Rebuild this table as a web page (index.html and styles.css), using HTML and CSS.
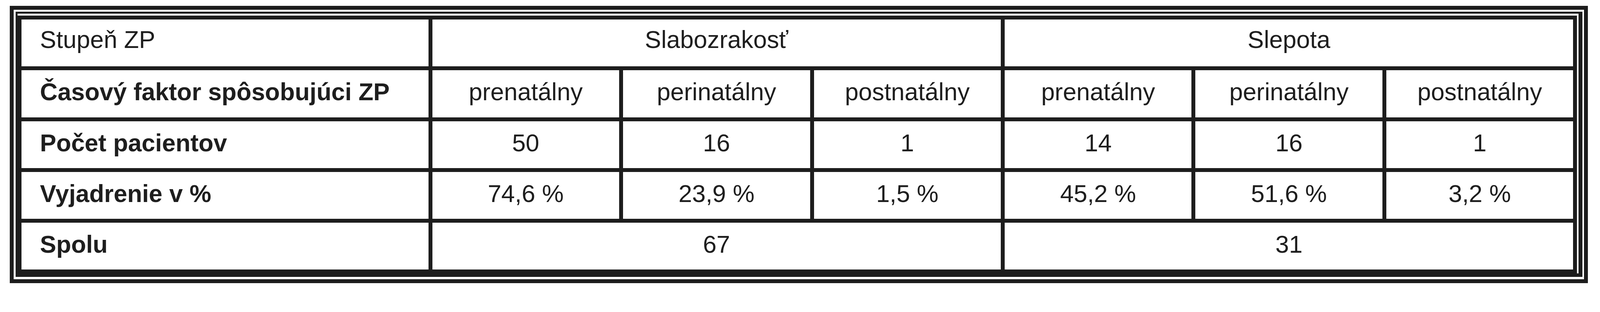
FILE: index.html
```html
<!DOCTYPE html>
<html lang="sk">
<head>
<meta charset="utf-8">
<title>Stupeň ZP</title>
<link rel="stylesheet" href="styles.css">
</head>
<body>
<div class="outer">
  <div class="inner">
    <table class="data">
      <colgroup>
        <col class="c-label">
        <col class="c-val"><col class="c-val"><col class="c-val">
        <col class="c-val"><col class="c-val"><col class="c-val">
      </colgroup>
      <tbody>
        <tr class="r-first">
          <td class="label plain">Stupeň ZP</td>
          <td colspan="3">Slabozrakosť</td>
          <td colspan="3">Slepota</td>
        </tr>
        <tr>
          <td class="label">Časový faktor spôsobujúci ZP</td>
          <td>prenatálny</td>
          <td>perinatálny</td>
          <td>postnatálny</td>
          <td>prenatálny</td>
          <td>perinatálny</td>
          <td>postnatálny</td>
        </tr>
        <tr>
          <td class="label">Počet pacientov</td>
          <td>50</td>
          <td>16</td>
          <td>1</td>
          <td>14</td>
          <td>16</td>
          <td>1</td>
        </tr>
        <tr>
          <td class="label">Vyjadrenie v %</td>
          <td>74,6 %</td>
          <td>23,9 %</td>
          <td>1,5 %</td>
          <td>45,2 %</td>
          <td>51,6 %</td>
          <td>3,2 %</td>
        </tr>
        <tr>
          <td class="label">Spolu</td>
          <td colspan="3">67</td>
          <td colspan="3">31</td>
        </tr>
      </tbody>
    </table>
  </div>
</div>
</body>
</html>
```

FILE: styles.css
```css
/* One design pixel of the 4394px-wide layout, tied to the viewport width. */
:root {
  --u: calc(100vw / 4394);
}

html, body {
  margin: 0;
  padding: 0;
  background: #ffffff;
  overflow: hidden;
}

body {
  font-family: "Liberation Sans", Arial, sans-serif;
  color: #1e1e1e;
}

.outer {
  box-sizing: border-box;
  width: calc(4334 * var(--u));
  margin: calc(16 * var(--u)) 0 0 calc(27 * var(--u));
  border: calc(11 * var(--u)) solid #1d1d1d;
  padding: calc(6 * var(--u)) calc(5 * var(--u));
}

.inner {
  border-style: solid;
  border-color: #1d1d1d;
  border-width: calc(6 * var(--u)) calc(11 * var(--u)) calc(10 * var(--u)) calc(6 * var(--u));
  padding-top: calc(5 * var(--u));
}

.data {
  table-layout: fixed;
  width: calc(4283 * var(--u));
  border-collapse: separate;
  border-spacing: calc(11 * var(--u));
  background: #1d1d1d;
  font-size: calc(67 * var(--u));
  line-height: 1.15;
}

.c-label { width: calc(1117 * var(--u)); }
.c-val { width: calc(513 * var(--u)); }

.data td {
  box-sizing: border-box;
  height: calc(129 * var(--u));
  padding: 0 0 calc(9 * var(--u)) 0;
  background: #ffffff;
  text-align: center;
  vertical-align: middle;
  white-space: nowrap;
  font-weight: 400;
}

.data .r-first td {
  padding-bottom: calc(18 * var(--u));
}

.data td.label {
  text-align: left;
  padding-left: calc(51 * var(--u));
  font-weight: 700;
}

.data td.plain {
  font-weight: 400;
}
```
